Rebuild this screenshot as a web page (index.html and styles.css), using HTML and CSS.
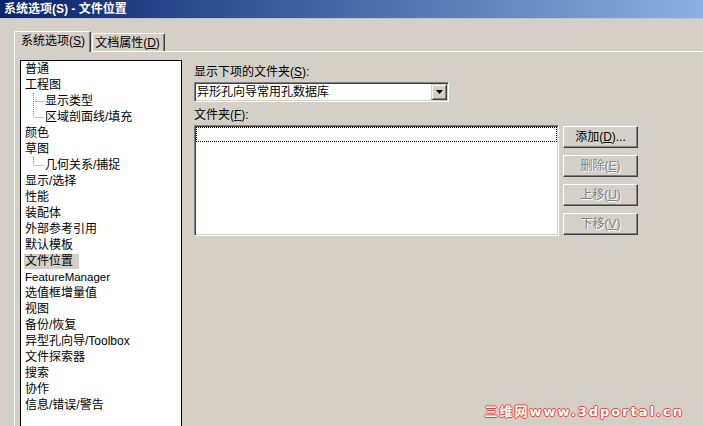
FILE: index.html
```html
<!DOCTYPE html>
<html lang="zh-CN">
<head>
<meta charset="utf-8">
<title>系统选项(S) - 文件位置</title>
<link rel="stylesheet" href="styles.css">
</head>
<body>
<div class="window">
  <div class="titlebar"><span class="title">系统选项(S) - 文件位置</span></div>
  <div class="tabs">
    <div class="tab active">系统选项(<u>S</u>)</div>
    <div class="tab">文档属性(<u>D</u>)</div>
  </div>
  <div class="panel">
    <ul class="tree">
      <li class="item">普通</li>
      <li class="item">工程图</li>
      <li class="item child"><svg class="conn" width="11" height="16" viewBox="0 0 11 16"><path d="M0.5 0V16M0.5 8.5H11" stroke="#808080" stroke-dasharray="1 1" fill="none"/></svg>显示类型</li>
      <li class="item child"><svg class="conn" width="11" height="16" viewBox="0 0 11 16"><path d="M0.5 0V8M0.5 8.5H11" stroke="#808080" stroke-dasharray="1 1" fill="none"/></svg>区域剖面线/填充</li>
      <li class="item">颜色</li>
      <li class="item">草图</li>
      <li class="item child"><svg class="conn" width="11" height="16" viewBox="0 0 11 16"><path d="M0.5 0V8M0.5 8.5H11" stroke="#808080" stroke-dasharray="1 1" fill="none"/></svg>几何关系/捕捉</li>
      <li class="item">显示/选择</li>
      <li class="item">性能</li>
      <li class="item">装配体</li>
      <li class="item">外部参考引用</li>
      <li class="item">默认模板</li>
      <li class="item"><span class="selected">文件位置</span></li>
      <li class="item latin">FeatureManager</li>
      <li class="item">选值框增量值</li>
      <li class="item">视图</li>
      <li class="item">备份/恢复</li>
      <li class="item">异型孔向导/Toolbox</li>
      <li class="item">文件探索器</li>
      <li class="item">搜索</li>
      <li class="item">协作</li>
      <li class="item">信息/错误/警告</li>
    </ul>
    <div class="content">
      <div class="label">显示下项的文件夹(<u>S</u>):</div>
      <div class="combo">
        <span class="combo-text">异形孔向导常用孔数据库</span>
        <span class="combo-btn"><svg width="7" height="4" viewBox="0 0 7 4"><path d="M0 0H7L3.5 4Z" fill="#000"/></svg></span>
      </div>
      <div class="label label2">文件夹(<u>F</u>):</div>
      <div class="folders">
        <div class="listbox"><div class="focusrow"></div></div>
        <div class="buttons">
          <button class="btn">添加(<u>D</u>)...</button>
          <button class="btn" disabled>删除(<u>E</u>)</button>
          <button class="btn" disabled>上移(<u>U</u>)</button>
          <button class="btn" disabled>下移(<u>V</u>)</button>
        </div>
      </div>
    </div>
  </div>
  <div class="watermark">三维网www.3dportal.cn</div>
</div>
</body>
</html>
```
FILE: styles.css
```css
* { box-sizing: border-box; }
html, body {
  margin: 0;
  padding: 0;
}
body {
  width: 703px;
  height: 426px;
  overflow: hidden;
  background: #d4d0c8;
  color: #000;
  font-family: "Liberation Sans", "Noto Sans CJK SC", sans-serif;
  font-size: 12px;
  line-height: 16px;
}
.window {
  position: relative;
  height: 426px;
  display: flex;
  flex-direction: column;
}
.titlebar {
  height: 19px;
  flex: none;
  background: linear-gradient(to right, #0a246a 0, #3a5c9c 40%, #8cb0e0 100%);
  border-bottom: 1px solid #b8c4d8;
  display: flex;
  align-items: center;
  padding-left: 4px;
}
.title {
  color: #fff;
  font-weight: bold;
  font-size: 12px;
  line-height: 18px;
}
.tabs {
  flex: none;
  height: 32px;
  display: flex;
  align-items: flex-end;
  padding-left: 14px;
}
.tab {
  height: 18px;
  width: 73px;
  margin-left: 1px;
  border-top: 1px solid #fff;
  border-left: 1px solid #fff;
  border-right: 1px solid #404040;
  box-shadow: inset -1px 0 #808080;
  border-radius: 2px 2px 0 0;
  display: flex;
  align-items: center;
  justify-content: center;
  padding-right: 2px;
  line-height: 16px;
}
.tab.active {
  width: 77px;
  height: 21px;
  margin-left: 0;
  margin-bottom: -1px;
  position: relative;
  z-index: 1;
  background: #d4d0c8;
  padding-bottom: 2px;
  padding-left: 3px;
}
.panel {
  flex: 1;
  margin-left: 14px;
  border-top: 1px solid #fff;
  border-left: 1px solid #fff;
  display: flex;
  align-items: flex-start;
}
.tree {
  list-style: none;
  margin: 8px 0 0 5px;
  padding: 0 0 0 4px;
  width: 162px;
  height: 380px;
  flex: none;
  background: #fff;
  border: 1px solid #000;
}
.item {
  height: 16px;
  line-height: 16px;
  white-space: nowrap;
  display: flex;
  align-items: center;
}
.item.child {
  padding-left: 8px;
}
.conn {
  flex: none;
  margin-right: 1px;
}
.item.latin {
  font-size: 11.5px;
}
.selected {
  background: #d4d0c8;
  margin-left: -1px;
  padding: 0 6px 0 1px;
  line-height: 15px;
}
.content {
  margin-left: 12px;
  padding-top: 13px;
  display: flex;
  flex-direction: column;
}
.label {
  line-height: 14px;
  height: 14px;
}
.combo {
  margin-top: 3px;
  width: 255px;
  height: 20px;
  background: #fff;
  border: 1px solid;
  border-color: #808080 #fff #fff #808080;
  box-shadow: inset 1px 1px #404040, inset -1px -1px #d4d0c8;
  display: flex;
  align-items: stretch;
  padding: 1px;
}
.combo-text {
  flex: 1;
  padding-left: 1px;
  line-height: 16px;
}
.combo-btn {
  width: 16px;
  background: #d4d0c8;
  border: 1px solid;
  border-color: #d4d0c8 #404040 #404040 #d4d0c8;
  box-shadow: inset 1px 1px #fff, inset -1px -1px #808080;
  display: flex;
  align-items: center;
  justify-content: center;
}
.label2 {
  margin-top: 6px;
}
.folders {
  margin-top: 3px;
  display: flex;
  align-items: flex-start;
}
.listbox {
  width: 365px;
  height: 111px;
  background: #fff;
  border: 1px solid;
  border-color: #808080 #fff #fff #808080;
  box-shadow: inset 1px 1px #404040, inset -1px -1px #d4d0c8;
  padding: 1px;
}
.focusrow {
  height: 15px;
  border: 1px dotted #000;
}
.buttons {
  margin-left: 4px;
  padding-top: 1px;
  display: flex;
  flex-direction: column;
  gap: 7px;
}
.btn {
  width: 75px;
  height: 22px;
  padding: 0;
  margin: 0;
  background: #d4d0c8;
  border: 1px solid;
  border-color: #fff #404040 #404040 #fff;
  box-shadow: inset -1px -1px #808080;
  font: inherit;
  color: #000;
  line-height: 16px;
}
.btn:disabled {
  color: #808080;
  text-shadow: 1px 1px 0 #fff;
}
.watermark {
  position: absolute;
  right: 19px;
  bottom: 7px;
  color: #fff;
  font-family: "DejaVu Sans", "Noto Sans CJK SC", sans-serif;
  font-weight: bold;
  font-size: 13px;
  line-height: 14px;
  letter-spacing: 2px;
  text-shadow: 1px 0 #e04848, -1px 0 #e04848, 0 1px #e04848, 0 -1px #e04848,
    0 0 3px #f0a8a8;
}
```
